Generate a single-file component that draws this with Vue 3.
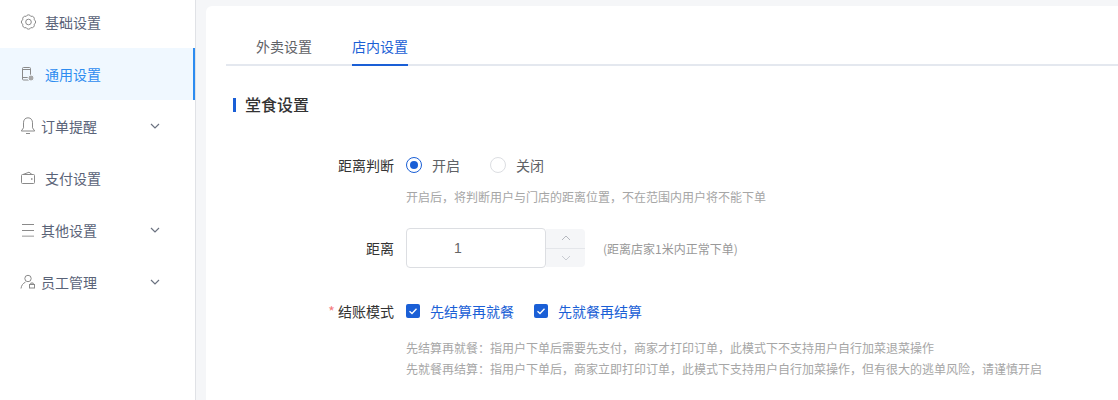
<script setup>
const menu = [
  { label: '基础设置', icon: 'gear', wide: true },
  { label: '通用设置', icon: 'phone', wide: true, active: true },
  { label: '订单提醒', icon: 'bell', arrow: true },
  { label: '支付设置', icon: 'wallet', wide: true },
  { label: '其他设置', icon: 'lines', arrow: true },
  { label: '员工管理', icon: 'user', arrow: true }
]
</script>

<template>
  <div class="page">
    <aside class="side">
      <div v-for="m in menu" :key="m.label" class="item" :class="{ active: m.active, wide: m.wide }">
        <svg class="ico" viewBox="0 0 16 18" fill="none" stroke="#8a8a8a" stroke-width="1">
          <template v-if="m.icon === 'gear'">
            <path d="M14.100 6.680A2.500 2.500 0 0 1 14.100 11.320A2.500 2.500 0 0 1 10.820 14.600A2.500 2.500 0 0 1 6.180 14.600A2.500 2.500 0 0 1 2.900 11.320A2.500 2.500 0 0 1 2.900 6.680A2.500 2.500 0 0 1 6.180 3.400A2.500 2.500 0 0 1 10.820 3.400A2.500 2.500 0 0 1 14.100 6.680Z" />
            <circle cx="8.500" cy="9" r="2.800" />
          </template>
          <template v-else-if="m.icon === 'phone'">
            <rect x="2.500" y="2.500" width="8" height="12.500" rx="1" />
            <path d="M2.500 12.500h6M2.500 4.500h8" />
            <circle cx="11" cy="13" r="3" fill="#a8a8a8" stroke="#f0f8ff" />
          </template>
          <template v-else-if="m.icon === 'bell'">
            <path d="M8 .800C5 .800 3.500 3 3.500 5.800v5L1.300 14h13.400l-2.200-3.200v-5C12.500 3 11 .800 8 .800z" />
            <path d="M6 16.500h4" />
          </template>
          <template v-else-if="m.icon === 'wallet'">
            <rect x="1.500" y="5.500" width="13" height="9" rx="1" />
            <path d="M3 5.500 9 3.200l3 2.300" />
            <path d="M11 10h1.500" stroke-width="1.400" />
          </template>
          <template v-else-if="m.icon === 'lines'">
            <path d="M2 3.500h12M2 9.500h12" />
            <path d="M2 15.200h12" stroke="#b5b5b5" stroke-width="1.400" />
          </template>
          <template v-else>
            <circle cx="8" cy="5.500" r="3.200" />
            <path d="M1 15.500c.4-3.200 2-5.200 4.500-6.400" />
            <rect x="9.500" y="11.500" width="5" height="3.500" />
            <path d="M10.800 11.500v-1.500h2.400v1.500" />
          </template>
        </svg>
        <span class="txt">{{ m.label }}</span>
        <svg v-if="m.arrow" class="arrow" viewBox="0 0 10 6" fill="none" stroke="#6b7280" stroke-width="1.200">
          <path d="M1 1l4 4 4-4" />
        </svg>
      </div>
    </aside>
    <main class="wrap">
      <div class="card">
        <div class="tabs">
          <span class="tab">外卖设置</span>
          <span class="tab on">店内设置</span>
        </div>
        <div class="title">堂食设置</div>

        <div class="row first">
          <label class="lab">距离判断</label>
          <div class="ctl">
            <span class="radio on"></span><span class="rtext">开启</span>
            <span class="radio"></span><span class="rtext">关闭</span>
          </div>
        </div>
        <div class="help h1">开启后，将判断用户与门店的距离位置，不在范围内用户将不能下单</div>

        <div class="row dist">
          <label class="lab">距离</label>
          <div class="ctl">
            <div class="num">1</div>
            <div class="steps">
              <div class="step">
                <svg viewBox="0 0 10 6" fill="none" stroke="#b5b8bf" stroke-width="1"><path d="M1 5l4-4 4 4" /></svg>
              </div>
              <div class="step">
                <svg viewBox="0 0 10 6" fill="none" stroke="#c9ccd2" stroke-width="1"><path d="M1 1l4 4 4-4" /></svg>
              </div>
            </div>
            <span class="hint">(距离店家1米内正常下单)</span>
          </div>
        </div>

        <div class="row mode">
          <label class="lab"><i>*</i> 结账模式</label>
          <div class="ctl">
            <span class="chk"><svg viewBox="0 0 14 14" fill="none" stroke="#fff" stroke-width="1.300"><path d="M3.500 7.200l2.500 2.300 4.500-4.800" /></svg></span>
            <span class="ctext">先结算再就餐</span>
            <span class="chk"><svg viewBox="0 0 14 14" fill="none" stroke="#fff" stroke-width="1.300"><path d="M3.500 7.200l2.500 2.300 4.500-4.800" /></svg></span>
            <span class="ctext">先就餐再结算</span>
          </div>
        </div>
        <div class="help h2">
          <p>先结算再就餐：指用户下单后需要先支付，商家才打印订单，此模式下不支持用户自行加菜退菜操作</p>
          <p>先就餐再结算：指用户下单后，商家立即打印订单，此模式下支持用户自行加菜操作，但有很大的逃单风险，请谨慎开启</p>
        </div>
      </div>
    </main>
  </div>
</template>

<style>
html, body { margin: 0; padding: 0; background: #fff; overflow: hidden; }
</style>

<style scoped>
.page {
  display: flex;
  width: 1118px;
  height: 400px;
  overflow: hidden;
  font-family: "Noto Sans CJK SC", "Liberation Sans", sans-serif;
  background: #f5f6f8;
}
.side {
  width: 196px;
  box-sizing: border-box;
  flex: none;
  background: #fff;
  border-right: 1px solid #e0e2e6;
  margin-top: -4px;
}
.item {
  height: 52px;
  display: flex;
  align-items: center;
  padding-left: 20px;
  box-sizing: border-box;
  font-size: 14px;
  color: #5a6378;
  position: relative;
}
.item.active {
  background: #f0f8ff;
  color: #2d8cf0;
}
.item.active::after {
  content: "";
  position: absolute;
  right: 0;
  top: 0;
  bottom: 0;
  width: 2px;
  background: #2d8cf0;
}
.ico { width: 16px; height: 18px; flex: none; }
.txt { margin-left: 5px; }
.wide .txt { margin-left: 9px; }
.arrow { width: 10px; height: 6px; margin-left: 53px; }
.wrap {
  flex: 1;
  padding: 6px 0 0 10px;
  min-width: 0;
}
.card {
  background: #fff;
  height: 500px;
  padding-left: 20px;
  border-radius: 6px 0 0 0;
}
.tabs {
  display: flex;
  gap: 40px;
  height: 58px;
  padding-left: 30px;
  border-bottom: 2px solid #e4e8ef;
}
.tab {
  font-size: 14px;
  line-height: 20px;
  padding-top: 30px;
  color: #606266;
  height: 28px;
}
.tab.on {
  color: #1a5fd6;
  border-bottom: 2px solid #1a5fd6;
}
.title {
  margin: 32px 0 0 7px;
  padding: 0 0 2px 9px;
  border-left: 3px solid #1a5fd6;
  font-size: 16px;
  font-weight: 500;
  line-height: 12px;
  color: #333;
}
.row { display: flex; align-items: center; }
.lab {
  width: 168px;
  text-align: right;
  font-size: 14px;
  color: #333;
  flex: none;
}
.lab i { color: #f47c7c; font-style: normal; }
.ctl {
  margin-left: 12px;
  display: flex;
  align-items: center;
  font-size: 14px;
  color: #606266;
}
.first { margin-top: 41px; height: 24px; }
.radio {
  width: 14px;
  height: 14px;
  border: 1px solid #dcdee2;
  border-radius: 50%;
  position: relative;
}
.radio.on { border-color: #1a5fd6; }
.radio.on::after {
  content: "";
  position: absolute;
  left: 3px;
  top: 3px;
  width: 8px;
  height: 8px;
  border-radius: 50%;
  background: #1a5fd6;
}
.rtext { margin: 0 30px 0 10px; }
.help { font-size: 12px; color: #a6a6a6; margin-left: 180px; }
.h1 { margin-top: 10px; line-height: 20px; }
.dist { margin-top: 21px; height: 40px; }
.num {
  width: 91px;
  height: 38px;
  padding-left: 47px;
  border: 1px solid #dcdee2;
  border-radius: 4px;
  background: #fff;
  line-height: 38px;
  color: #666;
  font-family: "Liberation Sans", sans-serif;
}
.steps {
  width: 39px;
  height: 38px;
  display: flex;
  flex-direction: column;
  background: #f5f6f8;
  border-radius: 0 4px 4px 0;
}
.step { flex: 1; display: flex; align-items: center; justify-content: center; border-bottom: 1px solid #e4e6ea; }
.step:last-child { border-bottom: 0; }
.step svg { width: 10px; height: 6px; }
.hint { font-size: 12px; color: #999; margin-left: 18px; }
.mode { margin-top: 31px; height: 24px; }
.chk {
  width: 14px;
  height: 14px;
  background: #1a5fd6;
  border-radius: 2px;
  display: flex;
}
.ctext { color: #1a5fd6; margin: 0 20px 0 10px; }
.h2 { margin-top: 14px; }
.h2 p { margin: 0; line-height: 21px; }
</style>
